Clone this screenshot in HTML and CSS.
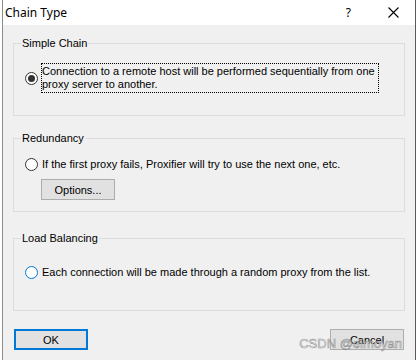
FILE: index.html
```html
<!DOCTYPE html>
<html lang="en">
<head>
  <meta charset="UTF-8">
  <title>Chain Type</title>
  <link rel="stylesheet" href="styles.css">
</head>
<body>

<div class="window">
  <!-- TITLE BAR -->
  <div class="titlebar">
    <span class="title">Chain Type</span>
    <span class="help">?</span>
    <svg class="close" width="11" height="11" viewBox="0 0 11 11">
      <path d="M0.5 0.5 L10.5 10.5 M10.5 0.5 L0.5 10.5" stroke="#000" stroke-width="1.1" fill="none"/>
    </svg>
  </div>

  <div class="dialog-body">
    <div class="group group-simple">
      <div class="group-title">Simple Chain</div>
      <div class="option">
        <span class="radio checked"></span>
        <span class="label focus">Connection to a remote host will be performed sequentially from one<br>proxy server to another.</span>
      </div>
    </div>

    <div class="group group-redundancy">
      <div class="group-title">Redundancy</div>
      <div class="option">
        <span class="radio"></span>
        <span class="label">If the first proxy fails, Proxifier will try to use the next one, etc.</span>
      </div>
      <button class="btn btn-options">Options...</button>
    </div>

    <div class="group group-balance">
      <div class="group-title">Load Balancing</div>
      <div class="option">
        <span class="radio hover"></span>
        <span class="label">Each connection will be made through a random proxy from the list.</span>
      </div>
    </div>

    <div class="footer">
      <button class="btn btn-default">OK</button>
      <button class="btn">Cancel</button>
    </div>
  </div>

  <div class="watermark">CSDN @elmoyan</div>
</div>

</body>
</html>
```

FILE: styles.css
```css
body {
  margin: 0;
  background-color: #fff;
  font-family: "Liberation Sans", Arial, sans-serif;
  font-size: 11px;
  color: #000;
}

.window {
  position: relative;
  margin-left: 2px;
  width: 414px;
  height: 360px;
  box-sizing: border-box;
  border-left: 1px solid #8c8c8c;
  border-right: 1px solid #5a5a5a;
  background-color: #f0f0f0;
}

/* title bar */
.titlebar {
  height: 25px;
  background-color: #fff;
  display: flex;
  align-items: center;
}

.title {
  font-family: "Noto Sans", sans-serif;
  font-size: 12px;
  margin-left: 2px;
  flex: 1;
}

.help {
  font-family: "Noto Sans", sans-serif;
  font-size: 12px;
  margin-right: 37px;
}

.close {
  margin-right: 16px;
}

/* body */
.dialog-body {
  padding-top: 18px;
}

.group {
  border: 1px solid #dcdcdc;
  box-sizing: border-box;
  margin: 0 10px 0 10px;
  height: 73px;
}

.group-redundancy {
  margin-top: 22px;
  height: 74px;
}

.group-balance {
  margin-top: 26px;
}

.group-title {
  width: max-content;
  margin: -7px 0 0 7px;
  padding: 0 1px;
  line-height: 13px;
  background-color: #f0f0f0;
}

.option {
  display: flex;
  align-items: center;
  margin-left: 11px;
}

.group-simple .option {
  margin-top: 13px;
}

.group-redundancy .option {
  margin-top: 11px;
}

.group-balance .option {
  margin-top: 19px;
}

.radio {
  width: 13px;
  height: 13px;
  box-sizing: border-box;
  border: 1px solid #333;
  border-radius: 50%;
  background-color: #fff;
  position: relative;
  flex: none;
}

.radio.checked::after {
  content: "";
  position: absolute;
  left: 2px;
  top: 2px;
  width: 7px;
  height: 7px;
  border-radius: 50%;
  background-color: #333;
}

.radio.hover {
  border-color: #0078d7;
}

.label {
  margin-left: 3px;
  line-height: 13px;
  padding: 1px 3px 1px 0;
  border: 1px solid transparent;
  white-space: nowrap;
}

.label.focus {
  border: 1px dotted #000;
}

/* buttons */
.btn {
  font-family: "Liberation Sans", Arial, sans-serif;
  font-size: 11px;
  width: 74px;
  height: 21px;
  box-sizing: border-box;
  background-color: #e1e1e1;
  border: 1px solid #adadad;
  padding: 0;
  color: #000;
}

.btn-options {
  display: block;
  margin: 6px 0 0 27px;
}

.btn-default {
  border: 2px solid #0078d7;
}

.footer {
  display: flex;
  justify-content: space-between;
  margin: 18px 11px 0 11px;
}

.watermark {
  position: absolute;
  right: 13px;
  bottom: 9px;
  font-family: "Liberation Sans", Arial, sans-serif;
  font-size: 13px;
  color: rgba(255, 255, 255, 0.7);
  -webkit-text-stroke: 0.6px rgba(120, 120, 120, 0.8);
}
```
